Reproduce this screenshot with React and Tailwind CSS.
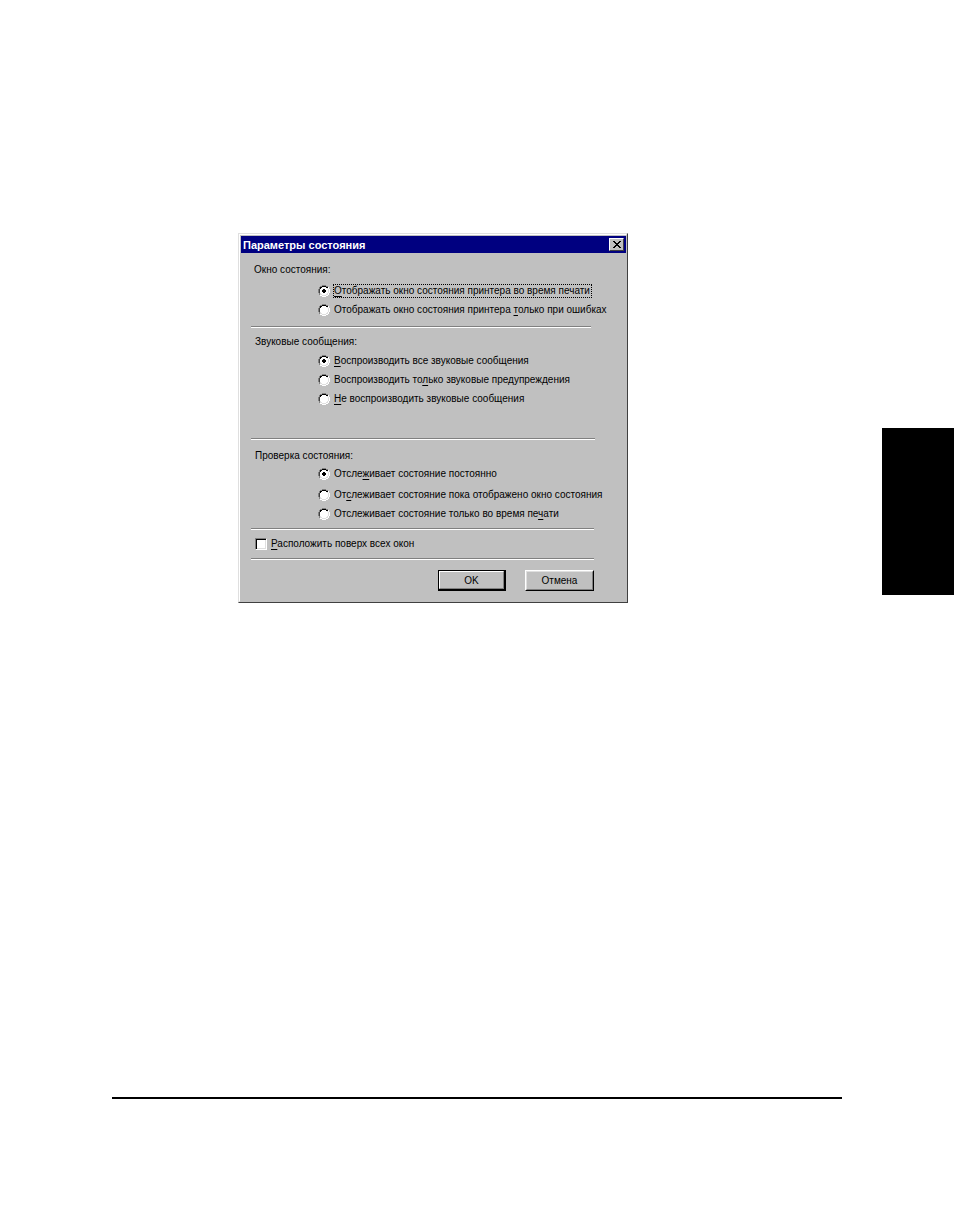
import { useState } from 'react'

const GROUPS = [
  {
    name: 'window',
    title: 'Окно состояния:',
    className: 'pt-[9px] pb-[6px]',
    legendClass: 'pl-[14px]',
    listClass: 'pt-[4px]',
    lineClass: 'mr-[35px]',
    options: [
      { before: '', key: 'О', after: 'тображать окно состояния принтера во время печати', focus: true },
      { before: 'Отображать окно состояния принтера ', key: 'т', after: 'олько при ошибках' },
    ],
  },
  {
    name: 'sound',
    title: 'Звуковые сообщения:',
    className: 'pt-[6px] pb-[29px]',
    legendClass: 'pl-[15px]',
    listClass: 'pt-[2px]',
    lineClass: 'mr-[31px]',
    options: [
      { before: '', key: 'В', after: 'оспроизводить все звуковые сообщения' },
      { before: 'Воспроизводить то', key: 'л', after: 'ько звуковые предупреждения' },
      { before: '', key: 'Н', after: 'е воспроизводить звуковые сообщения' },
    ],
  },
  {
    name: 'check',
    title: 'Проверка состояния:',
    className: 'pt-[8px] pb-[4px]',
    legendClass: 'pl-[15px]',
    listClass: 'pt-px',
    lineClass: 'mr-[32px]',
    options: [
      { before: 'Отсле', key: 'ж', after: 'ивает состояние постоянно', gap: true },
      { before: 'От', key: 'с', after: 'леживает состояние пока отображено окно состояния' },
      { before: 'Отслеживает состояние только во время пе', key: 'ч', after: 'ати' },
    ],
  },
]

function Accel({ before, letter, after }) {
  return (
    <>
      {before}
      <u className="underline underline-offset-2 decoration-1">{letter}</u>
      {after}
    </>
  )
}

function Line({ className }) {
  return <div className={`ml-[11px] h-[2px] border-t border-b border-t-[#808080] border-b-white ${className}`} />
}

function Radio({ id, name, checked, onChange }) {
  return (
    <span className="grid size-3 shrink-0">
      <input
        type="radio"
        id={id}
        name={name}
        checked={checked}
        onChange={onChange}
        className="col-start-1 row-start-1 size-3 appearance-none outline-none"
      />
      <svg viewBox="0 0 12 12" shapeRendering="crispEdges" className="pointer-events-none col-start-1 row-start-1 size-3">
        {/* bevelled ring, one pixel per step */}
        <path fill="#808080" d="M4 0h4v1H4zM2 1h2v1H2zM8 1h2v1H8zM1 2h1v2H1zM0 4h1v4H0zM1 8h1v2H1z" />
        <path fill="#fff" d="M10 2h1v2h-1zM11 4h1v4h-1zM10 8h1v2h-1zM8 10h2v1H8zM4 11h4v1H4zM2 10h2v1H2z" />
        <path fill="#fff" d="M4 2h4v1h1v1h1v4H9v1H8v1H4V9H3V8H2V4h1V3h1z" />
        <path fill="#000" d="M4 1h4v1H4zM2 2h2v1H2zM8 2h2v1H8zM2 3h1v1H2z" />
        <path fill="#404040" d="M1 4h1v4H1z" />
        <path fill="#dfdfdf" d="M9 3h1v1H9zM10 4h1v4h-1zM9 8h1v1H9zM8 9h2v1H8zM4 10h4v1H4zM2 9h2v1H2zM2 8h1v1H2z" />
        {checked && <path fill="#000" d="M5 4h2v1h1v2H7v1H5V7H4V5h1z" />}
      </svg>
    </span>
  )
}

function Group({ group }) {
  const [selected, setSelected] = useState(0)
  return (
    <>
      <fieldset className={group.className}>
        <legend className={`float-left h-4 w-full leading-4 ${group.legendClass}`}>{group.title}</legend>
        <div className={`clear-both pl-[78px] ${group.listClass}`}>
          {group.options.map((option, i) => {
            const id = `${group.name}-${i}`
            return (
              <div key={id} className={`flex h-[19px] items-center gap-[3px] pb-px ${option.gap ? 'mb-[2px]' : ''}`}>
                <Radio id={id} name={group.name} checked={selected === i} onChange={() => setSelected(i)} />
                <label
                  htmlFor={id}
                  className={`border border-dotted pr-px leading-3 whitespace-nowrap ${option.focus ? 'border-black' : 'border-transparent'}`}
                >
                  <Accel before={option.before} letter={option.key} after={option.after} />
                </label>
              </div>
            )
          })}
        </div>
      </fieldset>
      <Line className={group.lineClass} />
    </>
  )
}

function StatusDialog() {
  const [onTop, setOnTop] = useState(false)
  return (
    <section
      aria-labelledby="dialog-title"
      className="w-[390px] shrink-0 border border-t-[#dfdfdf] border-l-[#dfdfdf] border-r-[#404040] border-b-[#404040] bg-[#c0c0c0] text-[10px] text-black"
    >
      <div className="border border-t-white border-l-white border-r-[#c0c0c0] border-b-[#c0c0c0]">
        {/* Title bar */}
        <div className="mt-px ml-px flex h-[17px] items-center justify-between bg-[#000080] pr-[2px] pl-[2px]">
          <h1 id="dialog-title" className="text-[11px] leading-4 font-bold text-white">Параметры состояния</h1>
          <button
            type="button"
            aria-label="Закрыть"
            className="flex h-[13px] w-[15px] items-center justify-center border border-t-white border-l-white border-r-[#404040] border-b-[#404040] bg-[#c0c0c0]"
          >
            <svg viewBox="0 0 8 7" shapeRendering="crispEdges" className="h-[7px] w-2">
              <path d="M0 0h2v1h1v1h2V1h1V0h2v1H7v1H6v1H5v1h1v1h1v1h1v1H6V6H5V5H3v1H2v1H0V6h1V5h1V4h1V3H2V2H1V1H0z" />
            </svg>
          </button>
        </div>

        {GROUPS.map((group) => (
          <Group key={group.name} group={group} />
        ))}

        <div className="flex h-7 items-center gap-1 pl-[15px]">
          <input
            type="checkbox"
            id="on-top"
            checked={onTop}
            onChange={(e) => setOnTop(e.target.checked)}
            className="size-3 appearance-none border border-t-[#808080] border-l-[#808080] border-r-white border-b-white bg-white shadow-[inset_1px_1px_0_#000,inset_-1px_-1px_0_#dfdfdf] checked:bg-black"
          />
          <label htmlFor="on-top" className="leading-4">
            <Accel before="" letter="Р" after="асположить поверх всех окон" />
          </label>
        </div>
        <Line className="mr-[32px]" />

        {/* Buttons */}
        <div className="flex justify-end gap-[19px] pt-[10px] pr-[32px] pb-[10px]">
          <button type="button" className="h-[21px] w-[68px] border border-r-2 border-b-2 border-black">
            <span className="flex h-full items-center justify-center border border-t-white border-l-white border-r-[#808080] border-b-[#808080]">OK</span>
          </button>
          <button type="button" className="h-[21px] w-[69px] border border-t-white border-l-white border-r-black border-b-black">
            <span className="flex h-full items-center justify-center border border-t-[#dfdfdf] border-l-[#dfdfdf] border-r-[#808080] border-b-[#808080]">Отмена</span>
          </button>
        </div>
      </div>
    </section>
  )
}

export default function App() {
  return (
    <main className="flex min-h-screen flex-col bg-white font-['Liberation_Sans',Arial,sans-serif]">
      <div className="flex items-start justify-between pt-[233px] pl-[238px]">
        <StatusDialog />
        {/* Thumb index on the page edge */}
        <div className="mt-[195px] h-[167px] w-[72px] bg-black" />
      </div>
      <hr className="mx-28 mt-auto mb-32 border-t-2 border-black" />
    </main>
  )
}
